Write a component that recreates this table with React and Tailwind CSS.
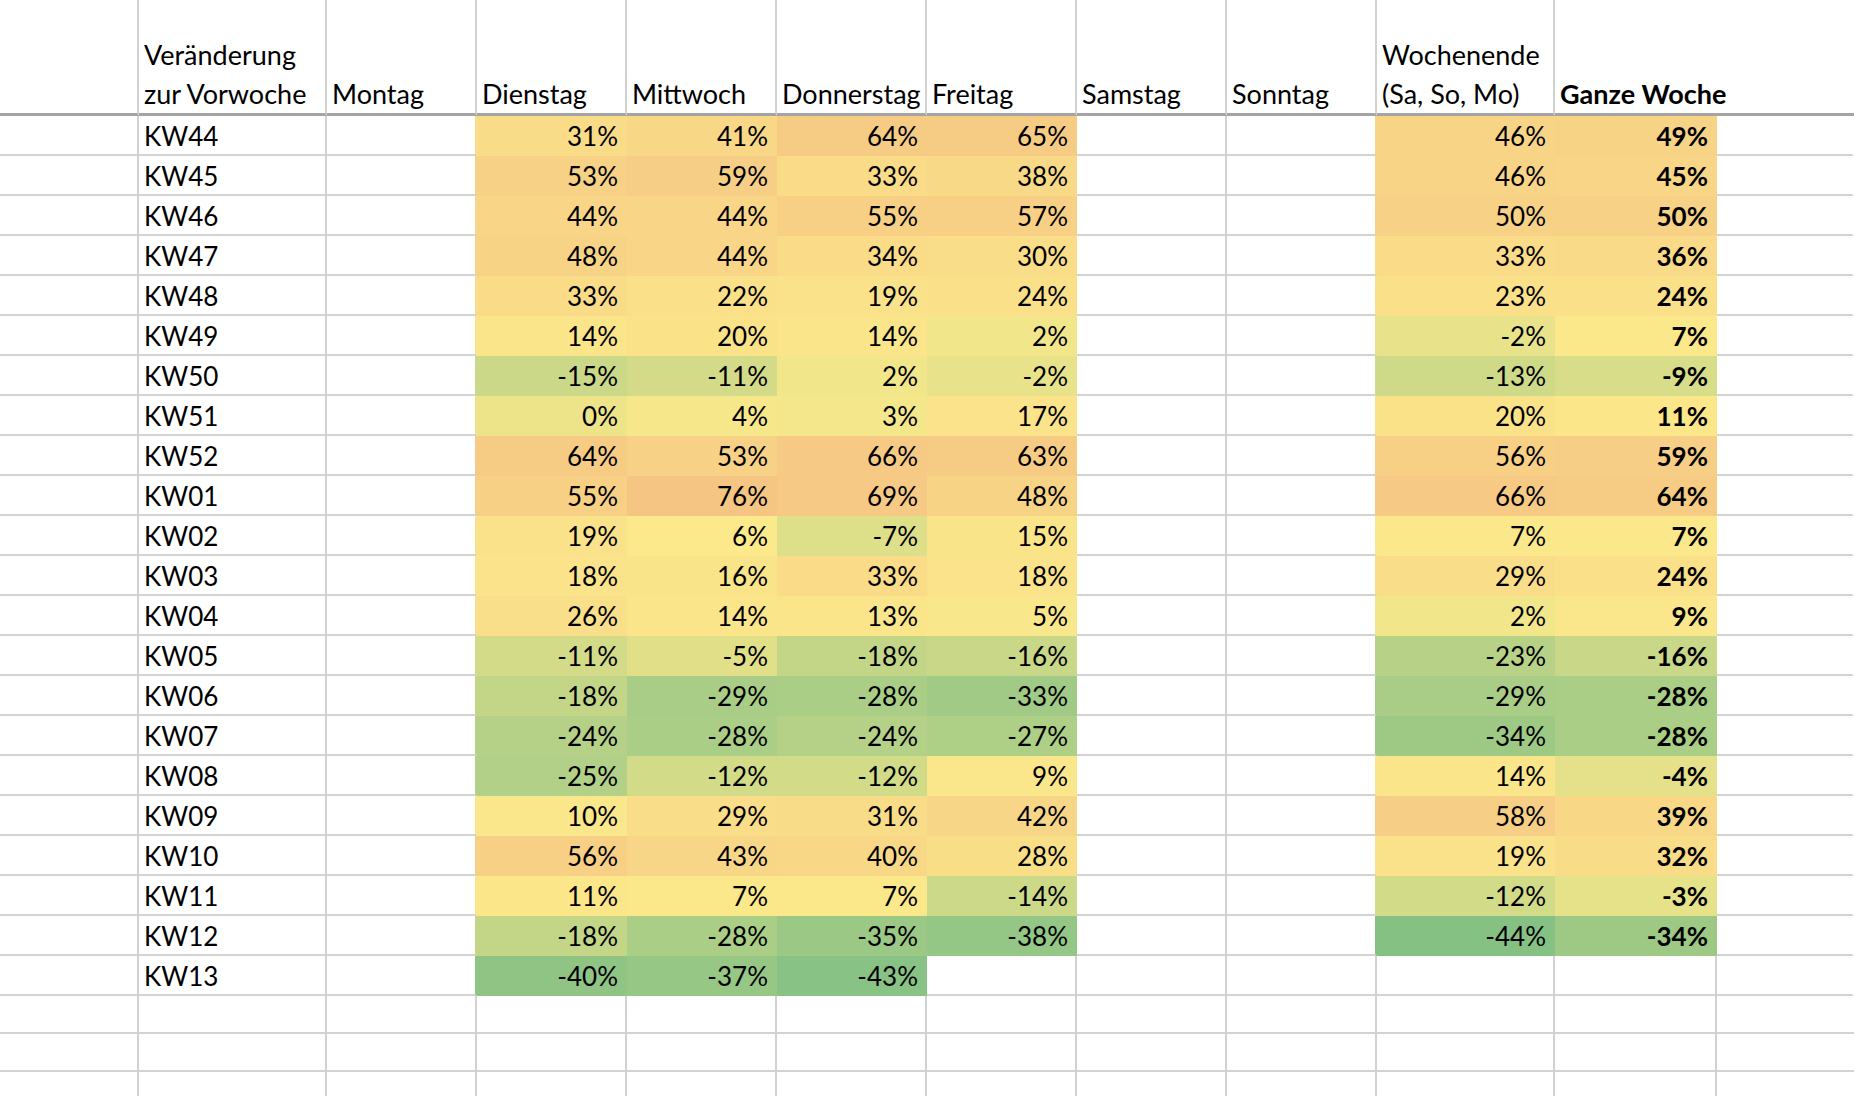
import React from "react";

const G = [134, 193, 132];
const Y = [251, 233, 139];
const O = [245, 197, 131];
const MIN = -44, MID = 6, MAX = 76;
const GRID = "#d2d2d2";

function fillFor(v) {
  if (v === null || v === undefined) return null;
  let b, t;
  if (v <= MID) { b = G; t = (MID - v) / (MID - MIN); }
  else { b = O; t = (v - MID) / (MAX - MID); }
  t = Math.max(0, Math.min(1, t));
  const c = Y.map((x, i) => Math.round(x + (b[i] - x) * t));
  return `rgb(${c.join(",")})`;
}

const data = [
  ["KW44", 31, 41, 64, 65, 46, 49],
  ["KW45", 53, 59, 33, 38, 46, 45],
  ["KW46", 44, 44, 55, 57, 50, 50],
  ["KW47", 48, 44, 34, 30, 33, 36],
  ["KW48", 33, 22, 19, 24, 23, 24],
  ["KW49", 14, 20, 14, 2, -2, 7],
  ["KW50", -15, -11, 2, -2, -13, -9],
  ["KW51", 0, 4, 3, 17, 20, 11],
  ["KW52", 64, 53, 66, 63, 56, 59],
  ["KW01", 55, 76, 69, 48, 66, 64],
  ["KW02", 19, 6, -7, 15, 7, 7],
  ["KW03", 18, 16, 33, 18, 29, 24],
  ["KW04", 26, 14, 13, 5, 2, 9],
  ["KW05", -11, -5, -18, -16, -23, -16],
  ["KW06", -18, -29, -28, -33, -29, -28],
  ["KW07", -24, -28, -24, -27, -34, -28],
  ["KW08", -25, -12, -12, 9, 14, -4],
  ["KW09", 10, 29, 31, 42, 58, 39],
  ["KW10", 56, 43, 40, 28, 19, 32],
  ["KW11", 11, 7, 7, -14, -12, -3],
  ["KW12", -18, -28, -35, -38, -44, -34],
  ["KW13", -40, -37, -43, null, null, null],
];

function toCells(row) {
  const [label, di, mi, dn, fr, we, gw] = row;
  return [
    null,
    { text: label },
    null,
    { num: di },
    { num: mi },
    { num: dn },
    { num: fr },
    null,
    null,
    { num: we },
    { num: gw, bold: true },
    null,
  ].map((c) => (c && c.num === null ? null : c));
}

const NCOL = 12;

function DataRow({ cells }) {
  const fills = cells.map((c) => (c && c.num !== undefined ? fillFor(c.num) : null));
  return (
    <>
      {cells.map((c, i) => {
        const right =
          i === NCOL - 1 ? "transparent" : fills[i] || fills[i + 1] || GRID;
        const bottom = fills[i] || GRID;
        const style = {
          backgroundColor: fills[i] || "#ffffff",
          borderRightColor: right,
          borderBottomColor: bottom,
        };
        const isNum = c && c.num !== undefined;
        return (
          <div
            key={i}
            style={style}
            className={`h-[40px] border-r-2 border-b-2 flex items-start pt-[5px] ${
              isNum ? "justify-end pr-[7px]" : "justify-start pl-[5px]"
            } text-[26px] leading-[30px] whitespace-nowrap ${
              c && c.bold ? "font-bold" : "font-normal"
            }`}
          >
            {c ? (isNum ? `${c.num}%` : c.text) : null}
          </div>
        );
      })}
    </>
  );
}

function EmptyRow() {
  return (
    <>
      {Array.from({ length: NCOL }).map((_, i) => (
        <div
          key={i}
          className={`h-[38px] border-b-2 border-[#d2d2d2] ${
            i === NCOL - 1 ? "" : "border-r-2"
          }`}
        />
      ))}
    </>
  );
}

function HeaderCell({ children, last, bold }) {
  return (
    <div
      className={`h-[116px] border-b-[3px] border-b-[#a4a4a4] ${
        last ? "" : "border-r-2 border-r-[#d2d2d2]"
      } flex items-end pb-0 pl-[5px] text-[27px] leading-[39px] whitespace-nowrap ${
        bold ? "font-bold" : "font-normal"
      }`}
    >
      <div>{children}</div>
    </div>
  );
}

export default function App() {
  const rows = data.map(toCells);
  return (
    <div className="w-[1854px] h-[1096px] overflow-hidden bg-white text-black font-['Lato',sans-serif]">
      <div className="grid grid-cols-[139px_188px_150px_150px_150px_150px_150px_150px_150px_178px_162px_137px]">
        <HeaderCell />
        <HeaderCell>
          Veränderung
          <br />
          zur Vorwoche
        </HeaderCell>
        <HeaderCell>Montag</HeaderCell>
        <HeaderCell>Dienstag</HeaderCell>
        <HeaderCell>Mittwoch</HeaderCell>
        <HeaderCell>Donnerstag</HeaderCell>
        <HeaderCell>Freitag</HeaderCell>
        <HeaderCell>Samstag</HeaderCell>
        <HeaderCell>Sonntag</HeaderCell>
        <HeaderCell>
          Wochenende
          <br />
          (Sa, So, Mo)
        </HeaderCell>
        <HeaderCell last bold>
          Ganze Woche
        </HeaderCell>
        <HeaderCell last />
        {rows.map((cells, r) => (
          <DataRow key={r} cells={cells} />
        ))}
        <EmptyRow />
        <EmptyRow />
        <EmptyRow />
      </div>
    </div>
  );
}
